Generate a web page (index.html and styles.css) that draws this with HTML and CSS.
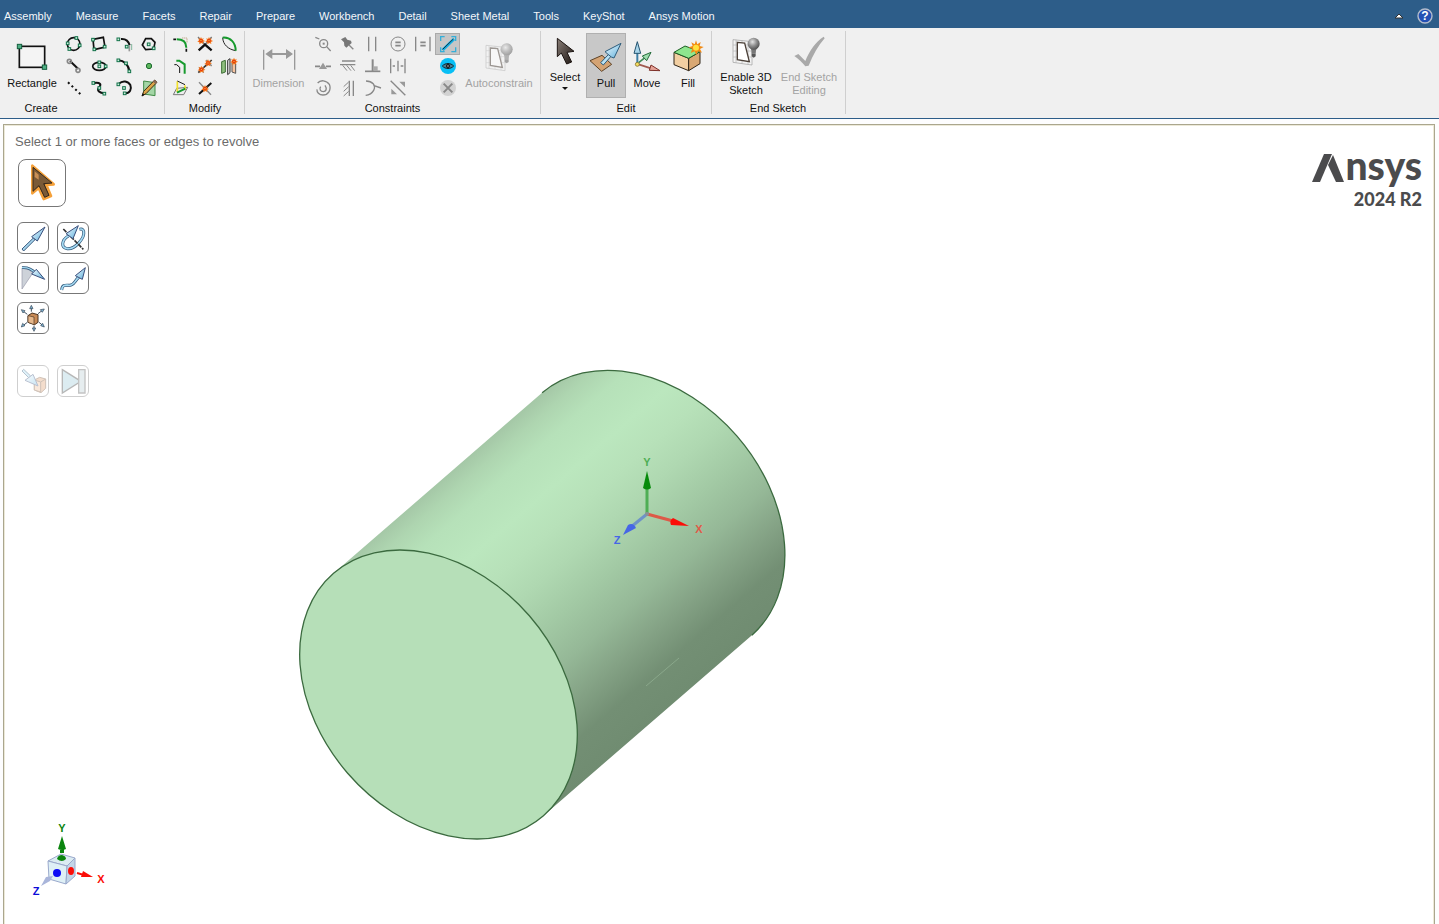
FILE: index.html
```
<!DOCTYPE html>
<html lang="en">

<head>
    <meta charset="UTF-8">
    <meta name="viewport" content="width=device-width, initial-scale=1.0">
    <title>Ansys 2024 R2</title>
    <link rel="stylesheet" href="styles.css">
</head>

<body>
    <!-- shared drawings -->
    <svg class="defs" width="0" height="0" aria-hidden="true">
        <defs>
            <rect id="node" x="-4" y="-4" width="8" height="8" fill="#cdeadb" stroke="#12734a" stroke-width="3" />
            <linearGradient id="blue" x1="0" y1="0" x2="1" y2="1">
                <stop offset="0" stop-color="#f2fbff" />
                <stop offset="1" stop-color="#5fb0dc" />
            </linearGradient>
            <linearGradient id="dark" x1="0" y1="0" x2="1" y2="1">
                <stop offset="0" stop-color="#8a7f78" />
                <stop offset="1" stop-color="#1d1512" />
            </linearGradient>
            <radialGradient id="bulb" cx="0.4" cy="0.35" r="0.7">
                <stop offset="0" stop-color="#e4e4e4" />
                <stop offset="0.5" stop-color="#8e8e8e" />
                <stop offset="1" stop-color="#4a4a4a" />
            </radialGradient>
            <g id="burst">
                <path d="M0-11L3-5L8-8L6-2L12 1L6 4L7 10L1 7L-5 11L-5 5L-11 3L-6-1L-8-8L-3-5Z" fill="#f5761a" />
                <circle r="5" fill="#e2320f" />
                <circle r="2" fill="#ffd23a" />
            </g>
            <g id="sheet">
                <path d="M15 8L72 14V84L15 76Z" fill="#f4f4f4" stroke="#9a9a9a" stroke-width="2" />
                <path d="M15 24H70M15 42H70M15 60H72M24 8V78M42 10V80M60 12V82" stroke="#b5b5b5" stroke-width="2" />
                <path d="M28 16L50 18L64 74L28 68Z" fill="#fff" stroke="#4b4038" stroke-width="4" />
                <path d="M66 30L70 40L71 50H83L84 40L89 30Z" fill="#777" />
                <circle cx="77" cy="20" r="18" fill="url(#bulb)" />
                <path d="M71 50H83V58L77 62L71 58Z" fill="#555" />
            </g>
        </defs>
    </svg>

    <nav class="tabs">
        <a href="#">Assembly</a>
        <a href="#">Measure</a>
        <a href="#">Facets</a>
        <a href="#">Repair</a>
        <a href="#">Prepare</a>
        <a href="#">Workbench</a>
        <a href="#">Detail</a>
        <a href="#">Sheet Metal</a>
        <a href="#">Tools</a>
        <a href="#">KeyShot</a>
        <a href="#">Ansys Motion</a>
        <div class="tabs-end">
            <button class="plain" aria-label="Collapse ribbon">
                <svg width="10" height="6" viewBox="0 0 10 6"><path d="M5 1L9 5H1Z" fill="#fff" stroke="#333" /></svg>
            </button>
            <button class="plain" aria-label="Help">
                <svg width="16" height="16" viewBox="0 0 16 16">
                    <circle cx="8" cy="8" r="7" fill="#2450b4" stroke="#b4bccc" stroke-width="1.4" />
                    <text x="8" y="12" class="help-mark">?</text>
                </svg>
            </button>
        </div>
    </nav>

    <header class="ribbon">
        <section class="group create">
            <div class="tools">
                <button class="big w58">
                    <svg viewBox="0 0 108 96">
                        <rect x="16" y="28" width="76" height="63" fill="#f4f4f4" stroke="#111" stroke-width="5" />
                        <rect x="10" y="22" width="13" height="13" fill="#4fae84" stroke="#14603f" stroke-width="3" />
                        <rect x="85" y="84" width="13" height="13" fill="#4fae84" stroke="#14603f" stroke-width="3" />
                    </svg>
                    <span>Rectangle</span>
                </button>
                <div class="grid cols-4">
                    <button class="small" aria-label="Circle"><svg viewBox="0 0 60 60">
                        <circle cx="29" cy="30" r="19" fill="none" stroke="#111" stroke-width="5" />
                        <use href="#node" x="37" y="12" /><use href="#node" x="16" y="45" /><use href="#node" x="47" y="34" /><use href="#node" x="11" y="28" />
                    </svg></button>
                    <button class="small" aria-label="Three-point rectangle"><svg viewBox="0 0 60 60">
                        <path d="M12 16L43 10L48 39L15 47Z" fill="none" stroke="#111" stroke-width="5" />
                        <use href="#node" x="12" y="17" /><use href="#node" x="47" y="38" /><use href="#node" x="16" y="46" />
                    </svg></button>
                    <button class="small" aria-label="Tangent arc"><svg viewBox="0 0 60 60">
                        <path d="M21 15C36 14 44 22 47 34" fill="none" stroke="#111" stroke-width="6" />
                        <path d="M46 34V52" stroke="#999" stroke-width="5" />
                        <path d="M53 30V48" stroke="#4b9a72" stroke-width="2" />
                        <use href="#node" x="13" y="16" /><use href="#node" x="38" y="38" />
                    </svg></button>
                    <button class="small" aria-label="Polygon"><svg viewBox="0 0 60 60">
                        <path d="M20 14H37L48 25L44 45L20 47L10 33Z" fill="none" stroke="#111" stroke-width="5" />
                        <use href="#node" x="29" y="31" /><use href="#node" x="44" y="43" />
                    </svg></button>
                    <button class="small" aria-label="Tangent line"><svg viewBox="0 0 60 60">
                        <path d="M18 15L42 38" stroke="#111" stroke-width="6" />
                        <circle cx="16" cy="16" r="6" fill="none" stroke="#888" stroke-width="5" />
                        <circle cx="42" cy="43" r="6" fill="none" stroke="#888" stroke-width="5" />
                    </svg></button>
                    <button class="small" aria-label="Ellipse"><svg viewBox="0 0 60 60">
                        <ellipse cx="31" cy="31" rx="20" ry="12" fill="none" stroke="#111" stroke-width="5" />
                        <use href="#node" x="31" y="31" /><use href="#node" x="31" y="19" /><use href="#node" x="50" y="31" />
                    </svg></button>
                    <button class="small" aria-label="Three-point arc"><svg viewBox="0 0 60 60">
                        <path d="M13 13C30 14 44 26 46 46" fill="none" stroke="#111" stroke-width="6" />
                        <use href="#node" x="13" y="13" /><use href="#node" x="36" y="22" /><use href="#node" x="46" y="46" />
                    </svg></button>
                    <button class="small" aria-label="Point"><svg viewBox="0 0 60 60">
                        <circle cx="30" cy="30" r="8" fill="#5db65d" stroke="#1d6b30" stroke-width="3" />
                    </svg></button>
                    <button class="small" aria-label="Construction line"><svg viewBox="0 0 60 60">
                        <path d="M12 13L50 49" stroke="#111" stroke-width="6" stroke-dasharray="6 9" />
                    </svg></button>
                    <button class="small" aria-label="Spline"><svg viewBox="0 0 60 60">
                        <path d="M15 15C34 12 38 20 30 28C22 38 32 45 47 46" fill="none" stroke="#111" stroke-width="6" />
                        <use href="#node" x="13" y="15" /><use href="#node" x="31" y="30" /><use href="#node" x="46" y="47" />
                    </svg></button>
                    <button class="small" aria-label="Sweep arc"><svg viewBox="0 0 60 60">
                        <path d="M15 17C26 6 42 9 49 21C54 34 47 46 35 46" fill="none" stroke="#111" stroke-width="6" />
                        <use href="#node" x="13" y="19" /><use href="#node" x="30" y="30" /><use href="#node" x="32" y="46" />
                    </svg></button>
                    <button class="small" aria-label="Face curve"><svg viewBox="0 0 60 60">
                        <path d="M14 9L48 14V53L14 48Z" fill="#a4d6a6" stroke="#3f8a45" stroke-width="3" />
                        <path d="M47 6L54 13L21 47L9 54L14 40Z" fill="#dba446" stroke="#3b2c18" stroke-width="3" />
                        <path d="M47 6L54 13L49 18L42 11Z" fill="#8a6a58" />
                        <path d="M8 55L11 46L17 50Z" fill="#111" />
                    </svg></button>
                </div>
            </div>
            <div class="group-name">Create</div>
        </section>

        <section class="group modify">
            <div class="tools">
                <div class="grid cols-3">
                    <button class="small" aria-label="Round corner"><svg viewBox="0 0 60 60">
                        <path d="M17 16C36 16 46 24 46 41" fill="none" stroke="#169a2d" stroke-width="6" />
                        <path d="M7 16H15M46 44V53" stroke="#111" stroke-width="5" />
                        <path d="M34 12H48V26" fill="none" stroke="#b28a62" stroke-width="3" stroke-dasharray="3 3" />
                    </svg></button>
                    <button class="small" aria-label="Trim away"><svg viewBox="0 0 60 60">
                        <path d="M9 9L30 32L50 9" fill="none" stroke="#777" stroke-width="4" />
                        <path d="M11 49L30 32L50 49" fill="none" stroke="#111" stroke-width="7" />
                        <use href="#burst" x="18" y="20" /><use href="#burst" x="42" y="20" />
                    </svg></button>
                    <button class="small" aria-label="Create curve"><svg viewBox="0 0 60 60">
                        <path d="M11 11C12 32 28 46 50 50" fill="none" stroke="#222" stroke-width="3" />
                        <path d="M11 11C34 9 50 26 50 50" fill="none" stroke="#169a2d" stroke-width="6" />
                    </svg></button>
                    <button class="small" aria-label="Offset curve"><svg viewBox="0 0 60 60">
                        <path d="M10 26H17L26 34V51" fill="none" stroke="#111" stroke-width="3" />
                        <path d="M16 14H25L41 25V53" fill="none" stroke="#169a2d" stroke-width="6" />
                    </svg></button>
                    <button class="small" aria-label="Split curve"><svg viewBox="0 0 60 60">
                        <path d="M10 50L50 12" stroke="#333" stroke-width="5" />
                        <path d="M12 34L26 50M34 12L50 30" stroke="#888" stroke-width="4" />
                        <use href="#burst" x="39" y="21" /><use href="#burst" x="19" y="40" />
                    </svg></button>
                    <button class="small" aria-label="Mirror"><svg viewBox="0 0 60 60">
                        <path d="M8 17L19 13V48L8 52Z" fill="#8fc07f" stroke="#3b6b33" stroke-width="3" />
                        <path d="M26 13L33 8V50L26 56Z" fill="#ddd" stroke="#333" stroke-width="3" />
                        <path d="M39 20L50 24V52L39 48Z" fill="#f6c4a0" stroke="#555" stroke-width="3" />
                        <use href="#burst" x="45" y="16" />
                    </svg></button>
                    <button class="small" aria-label="Project to sketch"><svg viewBox="0 0 60 60">
                        <path d="M17 31L50 28L38 50H7Z" fill="#eee" stroke="#777" stroke-width="3" />
                        <path d="M19 10V42M42 22V36" fill="none" stroke="#f3e22a" stroke-width="5" />
                        <path d="M19 9L42 20" stroke="#222" stroke-width="3" />
                        <path d="M18 44L43 32" stroke="#169a2d" stroke-width="6" />
                    </svg></button>
                    <button class="small" aria-label="Extend"><svg viewBox="0 0 60 60">
                        <path d="M12 13L48 50" stroke="#888" stroke-width="4" />
                        <path d="M12 48L49 15" stroke="#111" stroke-width="6" />
                        <use href="#burst" x="30" y="32" />
                    </svg></button>
                </div>
            </div>
            <div class="group-name">Modify</div>
        </section>

        <section class="group constraints">
            <div class="tools">
                <button class="big w63" disabled>
                    <svg viewBox="0 0 108 96">
                        <path d="M8 38V98M101 38V98" stroke="#999" stroke-width="4" />
                        <path d="M28 51H82" stroke="#999" stroke-width="6" />
                        <path d="M13 51L34 36V66ZM96 51L75 36V66Z" fill="#999" />
                    </svg>
                    <span>Dimension</span>
                </button>
                <div class="grid cols-6 gray">
                    <button class="small" aria-label="Constraint inspector" disabled><svg viewBox="0 0 60 60">
                        <circle cx="32" cy="29" r="12" /><path d="M7 10L19 15M41 38L53 51" /><path d="M29 29H35" stroke-width="6" />
                    </svg></button>
                    <button class="small" aria-label="Fixed" disabled><svg viewBox="0 0 60 60">
                        <path d="M9 16L22 9L28 17L39 20L41 27L25 41L19 35L18 25Z" fill="#777" stroke="none" />
                        <path d="M33 33L46 46" />
                    </svg></button>
                    <button class="small" aria-label="Parallel" disabled><svg viewBox="0 0 60 60"><path d="M17 8V52M38 8V52" /></svg></button>
                    <button class="small" aria-label="Equal radius" disabled><svg viewBox="0 0 60 60">
                        <circle cx="30" cy="30" r="21" stroke-width="3" /><path d="M22 25H38M22 35H38" stroke-width="5" />
                    </svg></button>
                    <button class="small" aria-label="Equal distance" disabled><svg viewBox="0 0 60 60">
                        <path d="M8 8V52M51 8V52" /><path d="M22 25H38M22 35H38" stroke-width="5" />
                    </svg></button>
                    <button class="small active" aria-label="Show degrees of freedom"><svg viewBox="0 0 60 60">
                        <path d="M8 21V8H20M40 8H53V21M8 40V53H20M40 53H53V40" stroke="#35aed8" />
                        <path d="M14 48L48 15" stroke="#14b1e7" stroke-width="9" />
                        <path d="M14 46L46 15" stroke="#15323f" stroke-width="3" />
                    </svg></button>
                    <button class="small" aria-label="Midpoint" disabled><svg viewBox="0 0 60 60">
                        <path d="M6 31H21M39 31H54" stroke-width="5" /><path d="M18 39L30 20L42 39Z" fill="#999" stroke="none" />
                    </svg></button>
                    <button class="small" aria-label="Horizontal" disabled><svg viewBox="0 0 60 60">
                        <path d="M12 15H52M6 26H52" /><path d="M14 28L27 44M26 28L39 44M38 28L50 44" stroke-width="3" />
                    </svg></button>
                    <button class="small" aria-label="Perpendicular" disabled><svg viewBox="0 0 60 60">
                        <path d="M29 10V45" stroke-width="6" /><path d="M6 46H52" stroke-width="5" /><path d="M32 31H44V45H32Z" fill="#aaa" stroke="none" />
                    </svg></button>
                    <button class="small" aria-label="Symmetric" disabled><svg viewBox="0 0 60 60">
                        <path d="M8 8V52M51 8V52M30 14V46M14 30H21M38 30H46" />
                    </svg></button>
                    <span></span>
                    <button class="small" aria-label="Show constraints"><svg viewBox="0 0 60 60">
                        <circle cx="30" cy="30" r="24" fill="#08bff5" stroke="none" />
                        <path d="M13 30C22 20 38 20 47 30C38 40 22 40 13 30Z" fill="#4d7f92" stroke="#10242c" stroke-width="3" />
                        <circle cx="30" cy="30" r="6" fill="#111" stroke="none" /><circle cx="30" cy="30" r="2" fill="#fff" stroke="none" />
                    </svg></button>
                    <button class="small" aria-label="Concentric" disabled><svg viewBox="0 0 60 60">
                        <path d="M14 15C22 5 40 6 49 19C56 36 45 51 30 51C18 51 11 42 12 34" /><path d="M36 22C44 34 38 40 31 41C22 41 18 33 23 26" />
                    </svg></button>
                    <button class="small" aria-label="Vertical" disabled><svg viewBox="0 0 60 60">
                        <path d="M46 8V54M34 8V54" /><path d="M32 12L17 26M32 26L17 40M32 40L17 54" stroke-width="3" />
                    </svg></button>
                    <button class="small" aria-label="Tangent" disabled><svg viewBox="0 0 60 60">
                        <path d="M9 9C28 9 40 22 32 37C27 46 20 51 8 52M31 22L54 30" />
                    </svg></button>
                    <button class="small" aria-label="Equal length" disabled><svg viewBox="0 0 60 60">
                        <path d="M8 8L52 52" /><path d="M34 11H51V28ZM10 32L27 49H10Z" fill="#999" stroke="none" />
                    </svg></button>
                    <span></span>
                    <button class="small" aria-label="Delete constraints" disabled><svg viewBox="0 0 60 60">
                        <circle cx="30" cy="30" r="24" fill="#d2d2d2" stroke="none" /><path d="M17 17L43 43M43 17L17 43" stroke-width="6" />
                    </svg></button>
                </div>
                <button class="big w78" disabled>
                    <svg class="faded" viewBox="0 -17 108 96"><use href="#sheet" /></svg>
                    <span>Autoconstrain</span>
                </button>
            </div>
            <div class="group-name">Constraints</div>
        </section>

        <section class="group edit">
            <div class="tools">
                <button class="big compact w42">
                    <svg viewBox="0 0 108 96">
                        <path d="M31 4V59L43 48L59 81L74 75L60 46L81 43Z" fill="url(#dark)" stroke="#1d1512" stroke-width="3" />
                    </svg>
                    <span>Select</span>
                    <i class="caret"></i>
                </button>
                <button class="big pressed w40">
                    <svg viewBox="0 0 108 96">
                        <path d="M6 71L42 55L71 82L41 103Z" fill="#d4a373" stroke="#5c4226" stroke-width="3" />
                        <path d="M38 77L62 52L69 58L46 84Z" fill="#b9e2f4" stroke="#2f5d7c" stroke-width="3" />
                        <path d="M99 19L51 44L60 52L70 60L78 63Z" fill="url(#blue)" stroke="#2f5d7c" stroke-width="3" />
                    </svg>
                    <span>Pull</span>
                </button>
                <button class="big w42">
                    <svg viewBox="0 0 108 96">
                        <path d="M25 79V40" stroke="#3d7fa5" stroke-width="6" />
                        <path d="M25 14L35 49H15Z" fill="#a9d5ea" stroke="#24536f" stroke-width="3" />
                        <path d="M29 77L48 62" stroke="#3d8a55" stroke-width="5" />
                        <path d="M66 46L40 57L53 71Z" fill="#9ddcae" stroke="#246b3a" stroke-width="3" />
                        <path d="M29 82L66 94" stroke="#a05a50" stroke-width="5" />
                        <path d="M93 101L66 84L61 100Z" fill="#e6a297" stroke="#7d3028" stroke-width="3" />
                        <circle cx="25" cy="82" r="6" fill="#f4dd62" stroke="#6b5a1a" stroke-width="2" />
                    </svg>
                    <span>Move</span>
                </button>
                <button class="big w40">
                    <svg viewBox="0 0 108 96">
                        <path d="M12 46L56 64V101L12 83Z" fill="#f2cfa2" stroke="#2e2417" stroke-width="3" />
                        <path d="M56 64L90 44V80L56 101Z" fill="#d9a873" stroke="#2e2417" stroke-width="3" />
                        <path d="M12 46L45 27L90 44L56 64Z" fill="#8ee68e" stroke="#1c5d24" stroke-width="3" />
                        <path d="M78 10L82 22L92 15L89 27L101 30L90 36L96 47L84 43L79 54L74 43L62 48L67 36L56 31L68 27L64 16L74 22Z" fill="#f28a12" />
                        <circle cx="78" cy="32" r="9" fill="#ffe03c" />
                    </svg>
                    <span>Fill</span>
                </button>
            </div>
            <div class="group-name">Edit</div>
        </section>

        <section class="group end-sketch">
            <div class="tools">
                <button class="big compact w62">
                    <svg viewBox="0 0 108 96"><use href="#sheet" /></svg>
                    <span>Enable 3D<br>Sketch</span>
                </button>
                <button class="big compact w64" disabled>
                    <svg viewBox="0 0 108 96">
                        <path d="M10 57L22 51L43 72C55 42 74 14 98 -1L101 4C82 25 66 53 53 86L43 88C34 76 22 66 10 57Z" fill="#a9a9a9" />
                    </svg>
                    <span>End Sketch<br>Editing</span>
                </button>
            </div>
            <div class="group-name">End Sketch</div>
        </section>
    </header>

    <main class="viewport">
        <!-- model -->
        <svg class="scene" role="img" aria-label="Cylinder">
            <defs>
                <linearGradient id="side" gradientUnits="userSpaceOnUse" x1="334" y1="573" x2="543" y2="816">
                    <stop offset="0" stop-color="#a5c8a7" />
                    <stop offset="0.05" stop-color="#aed5b0" />
                    <stop offset="0.12" stop-color="#b6e1b9" />
                    <stop offset="0.24" stop-color="#bbe7be" />
                    <stop offset="0.34" stop-color="#b7e1b9" />
                    <stop offset="0.44" stop-color="#afd8b1" />
                    <stop offset="0.56" stop-color="#a2c9a4" />
                    <stop offset="0.68" stop-color="#95b897" />
                    <stop offset="0.79" stop-color="#84a285" />
                    <stop offset="0.89" stop-color="#738f74" />
                    <stop offset="1" stop-color="#708c71" />
                </linearGradient>
            </defs>
            <g transform="translate(-5 -126)">
                <path d="M333.6 573.3L542.1 392.8A160.3 120.2 49.1 0 1 751.9 635.2L543.4 815.7Z" fill="url(#side)" />
                <path d="M542.1 392.8A160.3 120.2 49.1 0 1 751.9 635.2" class="edge" />
                <path d="M646 686L679 658" stroke="#8aa88b" />
                <ellipse cx="438.5" cy="694.5" rx="160.3" ry="120.2" transform="rotate(49.1 438.5 694.5)" class="edge cap" />

                <path d="M647 514V488" stroke="#4fae55" stroke-width="3" />
                <path d="M647 471L651 488Q647 491 643 488Z" fill="#078a0b" />
                <path d="M647 514L673 521" stroke="#dd5a48" stroke-width="3" />
                <path d="M689 526L673 518Q669 521 671 525Z" fill="#fb0d08" />
                <path d="M647 514L631 527" stroke="#6e92c8" stroke-width="3" />
                <path d="M623 535L628 525Q633 522 636 528Z" fill="#4666e6" />
                <circle cx="647" cy="514" r="2" fill="#8b8f96" />
                <text x="647" y="466" class="axis" fill="#4fae55">Y</text>
                <text x="699" y="533" class="axis" fill="#e05a48">X</text>
                <text x="617" y="544" class="axis" fill="#4666e6">Z</text>
            </g>
        </svg>

        <div class="left">
            <p class="message">Select 1 or more faces or edges to revolve</p>
            <button class="guide pointer" aria-label="Select">
                <svg viewBox="0 6 96 120">
                    <path d="M19 14V97L38 81L53 114L75 105L61 72L83 70Z" fill="#735331" stroke="#f5a13a" stroke-width="8" stroke-linejoin="round" />
                    <path d="M21 19V91L39 74L56 109L69 103L53 68L78 66Z" fill="#7a5a37" stroke="#38291a" stroke-width="3" />
                    <path d="M26 31V48L38 56V41Z" fill="#c98f55" />
                </svg>
            </button>
            <div class="guides">
                <button class="guide" aria-label="Pull direction"><svg viewBox="0 0 90 90">
                    <path d="M12 78L46 45L51 50L17 84Z" fill="#a6d4ec" stroke="#3a5b80" stroke-width="3" />
                    <path d="M81 12L41 41L58 54Z" fill="url(#blue)" stroke="#3a4f7c" stroke-width="3" />
                </svg></button>
                <button class="guide" aria-label="Revolve"><svg viewBox="0 0 90 90">
                    <path d="M32 38C10 51 8 74 28 77C51 80 81 45 77 25C75 18 70 17 64 19" fill="none" stroke="#2f5578" stroke-width="9" />
                    <path d="M32 38C10 51 8 74 28 77C51 80 81 45 77 25C75 18 70 17 64 19" fill="none" stroke="#a6dbf3" stroke-width="5" />
                    <path d="M16 18L76 79" stroke="#333" stroke-width="5" stroke-dasharray="13 3" />
                    <path d="M61 8L24 32L45 47Z" fill="url(#blue)" stroke="#3a4f7c" stroke-width="3" />
                </svg></button>
                <button class="guide" aria-label="Draft"><svg viewBox="0 0 90 90">
                    <path d="M12 15V78L45 29Q30 15 12 15Z" fill="#cdd2d9" stroke="#99a" stroke-width="2" />
                    <path d="M12 14Q36 12 52 30" fill="none" stroke="#2f5578" stroke-width="8" />
                    <path d="M12 14Q36 12 52 30" fill="none" stroke="#a6dbf3" stroke-width="4" />
                    <path d="M80 49L41 33L55 19Z" fill="url(#blue)" stroke="#3a4f7c" stroke-width="3" />
                </svg></button>
                <button class="guide" aria-label="Sweep"><svg viewBox="0 0 90 90">
                    <path d="M11 81C13 60 28 69 39 66C51 63 50 53 63 42" fill="none" stroke="#2f5578" stroke-width="9" />
                    <path d="M11 81C13 60 28 69 39 66C51 63 50 53 63 42" fill="none" stroke="#a6dbf3" stroke-width="5" />
                    <path d="M82 14L52 38L73 49Z" fill="url(#blue)" stroke="#3a4f7c" stroke-width="3" />
                </svg></button>
                <button class="guide" aria-label="Scale body"><svg viewBox="0 0 90 90">
                    <path d="M30 38L42 30L60 35V58L50 65L30 58Z" fill="#c88a56" stroke="#4a321e" stroke-width="3" />
                    <path d="M30 38L48 42V65L30 58Z" fill="#e6b88c" stroke="#4a321e" stroke-width="2" />
                    <path d="M40 26V14M60 32L72 23M62 57L74 67M48 68V79M28 58L16 67M28 34L16 25" stroke="#456" stroke-width="3" />
                    <path d="M40 7L45 17H35ZM79 18L73 28L67 20ZM79 72L68 68L74 61ZM48 85L43 75H53ZM10 72L14 61L21 68ZM10 20L21 23L15 30Z" fill="#7fb3d2" stroke="#345" stroke-width="2" />
                </svg></button>
            </div>
            <div class="guides">
                <button class="guide" aria-label="Up to" disabled><svg viewBox="0 0 90 90">
                    <path d="M49 42L65 34L83 39V67L69 80L49 72Z" fill="#e0a070" stroke="#7a5438" stroke-width="3" />
                    <path d="M49 42L68 48V78L49 72ZM68 48L83 39" fill="#efc09a" stroke="#7a5438" stroke-width="3" />
                    <path d="M12 15L17 10L38 30L33 36Z" fill="#a6dbf3" stroke="#2f5578" stroke-width="3" />
                    <path d="M60 60L21 43L45 25Z" fill="url(#blue)" stroke="#3a4f7c" stroke-width="3" />
                </svg></button>
                <button class="guide" aria-label="Full pull" disabled><svg viewBox="0 0 90 90">
                    <path d="M13 11L69 46L13 81Z" fill="#9ccbd8" stroke="#333" stroke-width="4" />
                    <path d="M62 11H81V81H62Z" fill="#b8cdd2" stroke="#555" stroke-width="4" />
                </svg></button>
            </div>
        </div>

        <div class="brand" aria-label="Ansys 2024 R2">
            <div class="logo">
                <svg width="33" height="28" viewBox="0 0 33 28" aria-hidden="true">
                    <path d="M0 28L12 0H20L8 28Z" fill="#4b4b4d" />
                    <path d="M21 1L32 28H24L16 11Z" fill="#4b4b4d" />
                </svg>
                <span>nsys</span>
            </div>
            <div class="release">2024 R2</div>
        </div>

        <!-- view orientation -->
        <svg class="triad" width="80" height="80" viewBox="30 820 80 80">
            <path d="M48 861L61 854L75 858L67 866Z" fill="#dcecf2" stroke="#9aa9cc" />
            <path d="M48 861L67 866L66 884L49 879Z" fill="#dff0f6" stroke="#9aa9cc" />
            <path d="M67 866L75 858V876L66 884Z" fill="#c3d6e8" stroke="#9aa9cc" />
            <path d="M62 836L66 849Q62 851 58 849ZM60 847H64V853H60Z" fill="#0b850f" />
            <path d="M57 859Q58 855 62 855Q66 856 66 859Q62 863 57 859Z" fill="#0b850f" />
            <path d="M93 877L83 871L81 877Z" fill="#fb0d08" />
            <path d="M77 873L84 875" stroke="#fb0d08" stroke-width="2" />
            <ellipse cx="71" cy="871" rx="3" ry="4" fill="#fb0d08" />
            <path d="M41 886L46 877L53 876L50 881Z" fill="#a9b5da" />
            <circle cx="57" cy="873" r="4" fill="#0c0cf5" />
            <text x="62" y="832" class="axis" fill="#0b850f">Y</text>
            <text x="101" y="883" class="axis" fill="#fb0d08">X</text>
            <text x="36" y="895" class="axis" fill="#0c0cd8">Z</text>
        </svg>
    </main>
</body>

</html>
```
FILE: styles.css
```
* {
    box-sizing: border-box;
}

body {
    margin: 0;
    min-height: 100vh;
    display: flex;
    flex-direction: column;
    background-color: #fdfdfe;
    font-family: "Liberation Sans", Arial, sans-serif;
    font-size: 11px;
    line-height: 13px;
    color: #111;
}

button {
    font: inherit;
    color: inherit;
    background: none;
    border: 0;
    padding: 0;
}

.defs {
    position: absolute;
}

/* tab bar */
.tabs {
    height: 28px;
    display: flex;
    align-items: center;
    gap: 24px;
    padding: 4px 6px 0 4px;
    background-color: #2d5d89;
}

.tabs a {
    color: #f4f7fa;
    text-decoration: none;
}

.tabs-end {
    margin-left: auto;
    display: flex;
    align-items: center;
    gap: 13px;
}

.plain {
    display: flex;
}

.help-mark {
    font-size: 12px;
    font-weight: bold;
    fill: #fff;
    text-anchor: middle;
}

/* ribbon */
.ribbon {
    display: flex;
    height: 91px;
    padding-top: 3px;
    background-color: #f0f0f0;
    border-bottom: 1px solid #2d5d89;
}

.group {
    height: 83px;
    padding: 2px 3px 0;
    border-right: 1px solid #cfcfcf;
}

.modify {
    padding: 2px 3px 0 4px;
}

.end-sketch {
    padding-right: 4px;
}

.constraints {
    padding: 2px 2px 0;
}

.tools {
    display: flex;
    height: 66px;
}

.group-name {
    margin-top: 3px;
    text-align: center;
}

.create .group-name {
    width: 76px;
}

.grid {
    display: grid;
    grid-auto-rows: 22px;
}

.cols-3 {
    grid-template-columns: repeat(3, 24px);
}

.cols-4 {
    grid-template-columns: repeat(4, 25px);
}

.cols-6 {
    grid-template-columns: repeat(6, 25px);
}

.small {
    display: flex;
    align-items: center;
    justify-content: center;
}

.small svg {
    width: 20px;
    height: 20px;
    flex: none;
}

.gray svg {
    fill: none;
    stroke: #888;
    stroke-width: 4px;
}

.small.active {
    background-color: #c6c6c6;
    border: 1px solid #aaa;
}

.big {
    display: flex;
    flex-direction: column;
    align-items: center;
    gap: 8px;
    height: 65px;
    padding-top: 4px;
    white-space: nowrap;
}

.big svg {
    width: 36px;
    height: 32px;
    flex: none;
    overflow: visible;
}

.big.compact {
    gap: 2px;
}

.big:disabled {
    color: #a3a3a3;
}

.big.pressed {
    background-color: #c8c8c8;
    outline: 1px solid #b0b0b0;
    outline-offset: -1px;
}

.faded {
    opacity: 0.5;
}

.caret {
    margin-top: 1px;
    border: 3px solid transparent;
    border-top-color: #111;
    border-bottom: 0;
}

.w40 {
    width: 40px;
}

.w42 {
    width: 42px;
}

.w58 {
    width: 58px;
}

.w62 {
    width: 62px;
}

.w63 {
    width: 63px;
}

.w64 {
    width: 64px;
}

.w78 {
    width: 78px;
}

/* design window */
.viewport {
    position: relative;
    flex: 1;
    display: flex;
    justify-content: space-between;
    margin: 5px 4px 0 3px;
    background-color: #fff;
    border: 1px solid #aaa68e;
    border-bottom: 0;
    box-shadow: inset 1px 1px #ece9d8, inset -1px 0 #ece9d8;
    padding: 1px;
    overflow: hidden;
}

.scene {
    position: absolute;
    top: 1px;
    left: 1px;
    width: 100%;
    height: 100%;
}

.edge {
    fill: none;
    stroke: #3b6a3f;
    stroke-width: 1.3px;
}

.cap {
    fill: #b6dfb8;
}

.axis {
    font-size: 11px;
    font-weight: bold;
    text-anchor: middle;
}

.left {
    position: relative;
    padding: 8px 10px;
}

.message {
    margin: 0 0 10px;
    font-size: 13px;
    line-height: 15px;
    color: #6b6b6b;
}

.guides {
    display: grid;
    grid-template-columns: 32px 32px;
    gap: 8px;
    margin: 0 2px 31px;
}

.guide {
    display: flex;
    align-items: center;
    justify-content: center;
    width: 32px;
    height: 32px;
    background-color: #fff;
    border: 1px solid #777;
    border-radius: 6px;
}

.guide svg {
    width: 30px;
    height: 30px;
    flex: none;
}

.guide:disabled {
    opacity: 0.35;
}

.guide.pointer {
    width: 48px;
    height: 48px;
    margin: 0 3px 15px;
    border-radius: 8px;
}

.guide.pointer svg {
    width: 32px;
    height: 40px;
}

.brand {
    position: relative;
    padding: 24px 11px;
    font-family: Lato, sans-serif;
    font-weight: 900;
    color: #4b4b4d;
    text-align: right;
}

.logo {
    display: flex;
    align-items: flex-start;
    justify-content: flex-end;
    height: 38px;
    padding-top: 4px;
    font-size: 39px;
    line-height: 23px;
}

.release {
    font-size: 18px;
    line-height: 22px;
}

.triad {
    position: absolute;
    left: 26px;
    bottom: 24px;
}
```
